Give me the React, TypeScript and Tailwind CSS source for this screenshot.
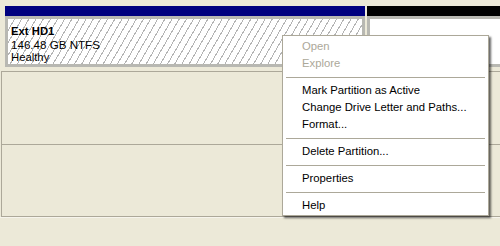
import React from "react";

type Item = { label: string; disabled?: boolean } | "sep";

const items: Item[] = [
  { label: "Open", disabled: true },
  { label: "Explore", disabled: true },
  "sep",
  { label: "Mark Partition as Active" },
  { label: "Change Drive Letter and Paths..." },
  { label: "Format..." },
  "sep",
  { label: "Delete Partition..." },
  "sep",
  { label: "Properties" },
  "sep",
  { label: "Help" },
];

export default function App() {
  return (
    <div className="relative w-[500px] h-[246px] overflow-hidden bg-[#ece9d8] font-['Liberation_Sans',Arial,sans-serif] text-[11.3px] leading-[13px] text-black">
      {/* top disk row */}
      <div className="flex h-[71px] pt-[6px] pl-[5px]">
        <div className="w-[360px] flex flex-col">
          <div className="h-[10px] bg-[#00007f]" />
          <div className="h-[51px] border-[3px] border-[#b8b8b2] bg-[image:repeating-linear-gradient(120deg,#ffffff_0px,#ffffff_5.2px,#b4b4b4_5.2px,#b4b4b4_6.2px)] pt-[6px] pl-[3px]">
            <div className="font-bold">Ext HD1</div>
            <div className="text-[11.6px]">146.48 GB NTFS</div>
            <div>Healthy</div>
          </div>
        </div>
        <div className="flex-1 ml-[2px] flex flex-col">
          <div className="h-[10px] bg-black" />
          <div className="h-[51px] border-[3px] border-r-0 border-[#b8b8b2] bg-white" />
        </div>
      </div>

      {/* next disk row area */}
      <div className="ml-[1px] border-l border-t border-b border-[#aca899]">
        <div className="h-[73px] border-b border-[#aca899]" />
        <div className="h-[71px]" />
      </div>
      <div className="h-px bg-[#f6f4ec]" />

      {/* context menu */}
      <div className="absolute left-[282px] top-[35px] w-[207px] bg-white border border-[#aca899] shadow-[2px_2px_2px_rgba(0,0,0,0.6)] pt-[2px] pb-[1px]">
        {items.map((it, i) =>
          it === "sep" ? (
            <div key={i} className="h-[10px] flex items-center px-[3px]">
              <div className="h-px w-full bg-[#aca899]" />
            </div>
          ) : (
            <div
              key={i}
              className={
                "h-[17px] flex items-center pl-[19px] whitespace-nowrap " +
                (it.disabled ? "text-[#aca899]" : "text-black")
              }
            >
              {it.label}
            </div>
          )
        )}
      </div>
    </div>
  );
}
